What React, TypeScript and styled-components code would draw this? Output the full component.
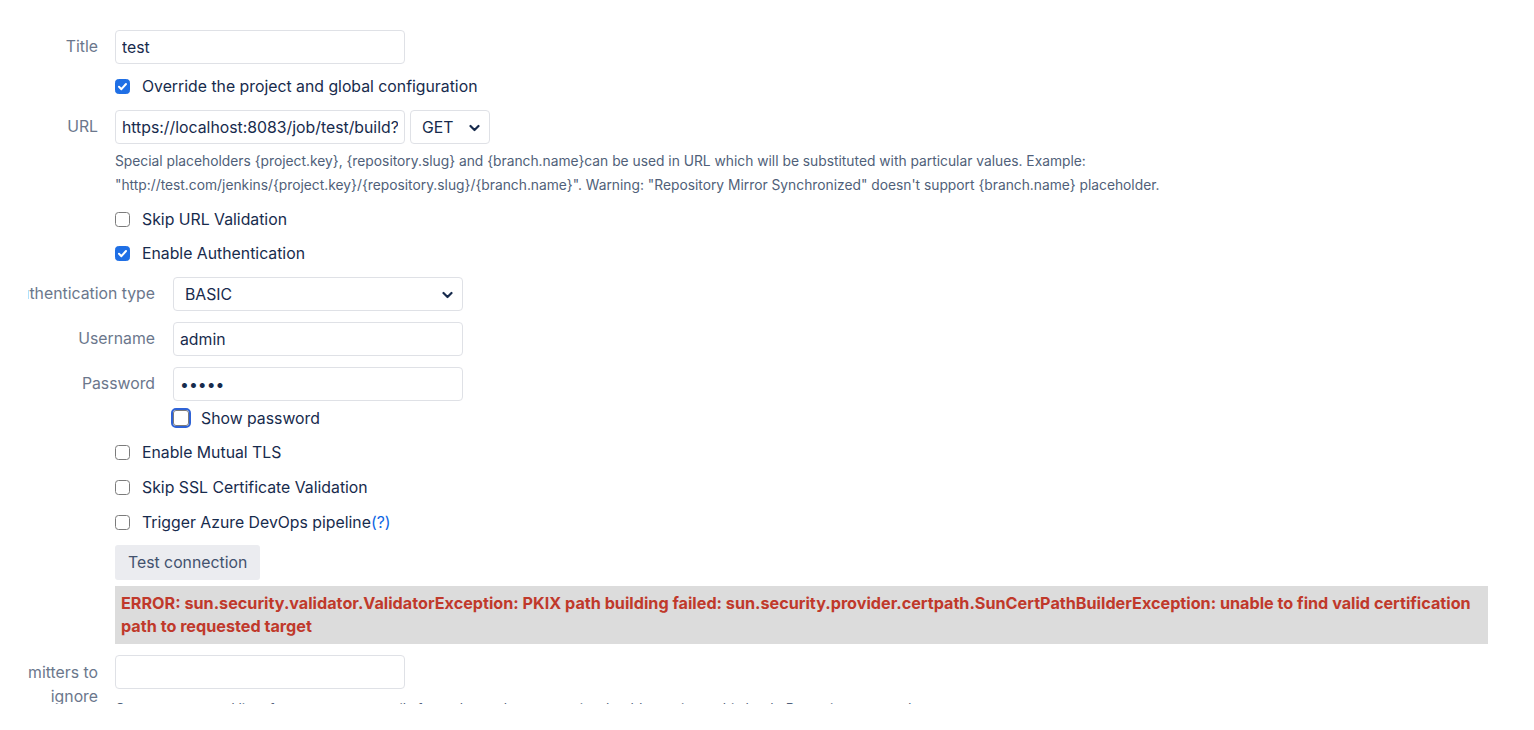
import React from "react";
import styled, { createGlobalStyle, css } from "styled-components";

const GlobalStyle = createGlobalStyle`
  body {
    margin: 0;
    background: #fff;
    font-family: Inter, "Noto Sans", sans-serif;
    color: #172b4d;
  }
`;

// the settings dialog body is scrolled sideways, so the labels get cut on the left
const Viewport = styled.div`
  margin-left: 28px;
  height: 704px;
  overflow: hidden;
  padding-top: 30px;
  box-sizing: border-box;
`;

const Form = styled.form`
  display: flex;
  flex-direction: column;
  padding-right: 46px;
`;

const Row = styled.div<{ $top?: number; $label?: number; $gap?: number }>`
  display: grid;
  grid-template-columns: ${(p) => p.$label ?? 70}px 1fr;
  column-gap: ${(p) => p.$gap ?? 17}px;
  margin-top: ${(p) => p.$top ?? 0}px;
`;

const Label = styled.label`
  display: flex;
  justify-content: flex-end;
  align-items: flex-start;
  padding-top: 7px;
  font-size: 15.8px;
  line-height: 20px;
  color: #6b778c;
`;

const LabelText = styled.span<{ $wrap?: boolean }>`
  flex-shrink: 0;
  text-align: right;
  white-space: nowrap;
  ${(p) =>
    p.$wrap &&
    css`
      white-space: normal;
      width: 112px;
      line-height: 24px;
      margin-top: -1px;
    `}
`;

const Controls = styled.div`
  display: flex;
  flex-direction: column;
  min-width: 0;
`;

const Inline = styled.div`
  display: flex;
  gap: 5px;
`;

const fieldBox = css`
  box-sizing: border-box;
  height: 34px;
  border: 1px solid #dfe1e6;
  border-radius: 4px;
  background: #fff;
  font-family: inherit;
  font-size: 15.8px;
  color: #172b4d;
`;

const TextInput = styled.input`
  ${fieldBox};
  width: 290px;
  padding: 0 6px;
  outline: none;
`;

const SelectBox = styled.div<{ $width: number }>`
  ${fieldBox};
  width: ${(p) => p.$width}px;
  display: flex;
  align-items: center;
  justify-content: space-between;
  padding: 1px 9px 0 11px;
`;

const Help = styled.div<{ $top?: number }>`
  margin-top: ${(p) => p.$top ?? 5}px;
  font-size: 13.8px;
  line-height: 24px;
  color: #505f79;
`;

const CheckRow = styled.label<{ $top?: number }>`
  display: flex;
  align-items: center;
  gap: 12px;
  height: 20px;
  margin-top: ${(p) => p.$top ?? 14}px;
  font-size: 15.8px;
  color: #172b4d;
`;

const Box = styled.span<{ $checked?: boolean; $focused?: boolean }>`
  box-sizing: border-box;
  flex-shrink: 0;
  width: 15px;
  height: 15px;
  border-radius: 3.5px;
  border: 1px solid #7b7b7b;
  background: #fff;
  display: inline-flex;
  align-items: center;
  justify-content: center;
  ${(p) =>
    p.$checked &&
    css`
      border-color: #1f6fe5;
      background: #1f6fe5;
    `}
  ${(p) =>
    p.$focused &&
    css`
      width: 16px;
      height: 16px;
      outline: 2.5px solid #2f63d6;
      outline-offset: 0.5px;
      border-radius: 3px;
    `}
`;

const HelpLink = styled.a`
  color: #0c66e4;
  text-decoration: none;
`;

const Button = styled.button`
  align-self: flex-start;
  margin-top: 13px;
  height: 35px;
  padding: 0 13px;
  border: none;
  border-radius: 3px;
  background: #ebecf0;
  color: #42526e;
  font-family: inherit;
  font-size: 15.8px;
`;

const ErrorBox = styled.div`
  margin-top: 6px;
  padding: 6px 6px 6px;
  background: #dcdcdc;
  color: #c0392b;
  font-weight: 700;
  font-size: 16.2px;
  line-height: 23px;
`;

const Tick = () => (
  <svg width="11" height="11" viewBox="0 0 11 11">
    <path d="M2 5.8l2.4 2.4L9 3" fill="none" stroke="#fff" strokeWidth="2" strokeLinecap="round" strokeLinejoin="round" />
  </svg>
);

const Chevron = () => (
  <svg width="11" height="8" viewBox="0 0 11 8">
    <path d="M1.5 2l4 4 4-4" fill="none" stroke="#172b4d" strokeWidth="2.2" strokeLinecap="round" strokeLinejoin="round" />
  </svg>
);

const Check: React.FC<{ label: React.ReactNode; checked?: boolean; focused?: boolean; top?: number }> = ({
  label,
  checked,
  focused,
  top,
}) => (
  <CheckRow $top={top}>
    <Box $checked={checked} $focused={focused}>{checked && <Tick />}</Box>
    <span>{label}</span>
  </CheckRow>
);

const Select: React.FC<{ value: string; width: number }> = ({ value, width }) => (
  <SelectBox $width={width}>
    <span>{value}</span>
    <Chevron />
  </SelectBox>
);

const App: React.FC = () => (
  <>
    <GlobalStyle />
    <Viewport>
      <Form>
        <Row>
          <Label><LabelText>Title</LabelText></Label>
          <Controls>
            <TextInput defaultValue="test" />
            <Check top={12} checked label="Override the project and global configuration" />
          </Controls>
        </Row>

        <Row $top={14}>
          <Label><LabelText>URL</LabelText></Label>
          <Controls>
            <Inline>
              <TextInput defaultValue="https://localhost:8083/job/test/build?" />
              <Select value="GET" width={80} />
            </Inline>
            <Help>
              Special placeholders {"{project.key}"}, {"{repository.slug}"} and {"{branch.name}"}can be used in URL which will be
              substituted with particular values. Example:
              <br />
              "http://test.com/jenkins/{"{project.key}"}/{"{repository.slug}"}/{"{branch.name}"}". Warning: "Repository Mirror
              Synchronized" doesn't support {"{branch.name}"} placeholder.
            </Help>
            <Check top={12} label="Skip URL Validation" />
            <Check checked label="Enable Authentication" />

            <Row $top={14} $label={40} $gap={18}>
              <Label><LabelText>Authentication type</LabelText></Label>
              <Select value="BASIC" width={290} />
            </Row>
            <Row $top={11} $label={40} $gap={18}>
              <Label><LabelText>Username</LabelText></Label>
              <TextInput defaultValue="admin" />
            </Row>
            <Row $top={11} $label={40} $gap={18}>
              <Label><LabelText>Password</LabelText></Label>
              <Controls>
                <TextInput type="password" defaultValue="admin" />
                <Check top={7} focused label="Show password" />
              </Controls>
            </Row>

            <Check label="Enable Mutual TLS" />
            <Check top={15} label="Skip SSL Certificate Validation" />
            <Check
              top={15}
              label={
                <>
                  Trigger Azure DevOps pipeline<HelpLink href="#">(?)</HelpLink>
                </>
              }
            />
            <Button type="button">Test connection</Button>
            <ErrorBox>
              ERROR: sun.security.validator.ValidatorException: PKIX path building failed:
              sun.security.provider.certpath.SunCertPathBuilderException: unable to find valid certification path to requested
              target
            </ErrorBox>
          </Controls>
        </Row>

        <Row $top={11}>
          <Label><LabelText $wrap>Committers to ignore</LabelText></Label>
          <Controls>
            <TextInput />
            <Help $top={8}>
              Comma separated list of usernames or emails for authors whose commits should not trigger this hook. Regex is supported.
            </Help>
          </Controls>
        </Row>
      </Form>
    </Viewport>
  </>
);

export default App;
